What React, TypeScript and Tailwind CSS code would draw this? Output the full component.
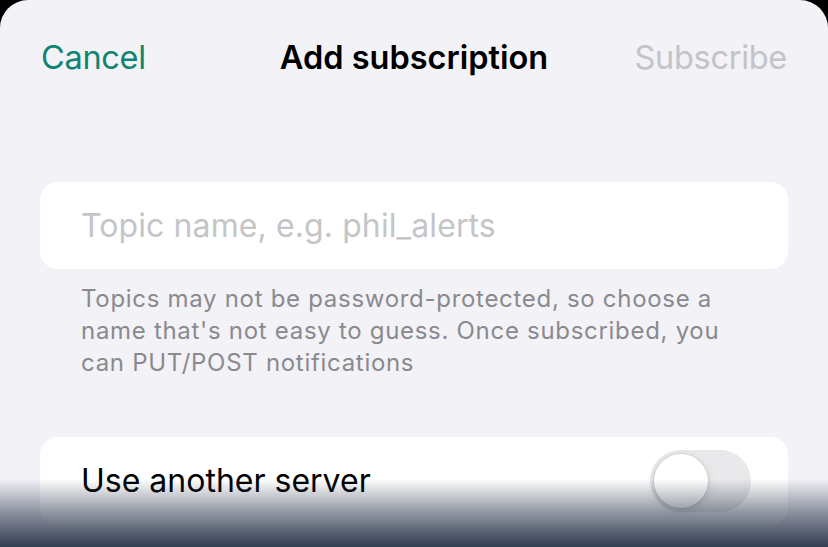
import * as React from "react";

export default function App() {
  const [useOther, setUseOther] = React.useState(false);

  return (
    <div className="bg-black w-[828px] h-[547px] overflow-hidden">
      <main
        className="relative bg-[#f2f2f7] w-full h-full rounded-t-[28px] overflow-hidden"
        style={{ fontFamily: "Inter, 'Noto Sans', sans-serif" }}
      >
        {/* Nav bar */}
        <header className="grid grid-cols-[1fr_auto_1fr] items-center px-[41px] pt-[34px] h-[78px]">
          <button className="justify-self-start text-[#0f8470] text-[32.5px] tracking-[-0.3px]">Cancel</button>
          <h1 className="text-black text-[32.5px] font-semibold tracking-[0px]">Add subscription</h1>
          <button className="justify-self-end text-[#c4c4c7] text-[32.5px] tracking-[-0.3px]">Subscribe</button>
        </header>

        <section className="px-[40px] pt-[104px]">
          <div className="bg-white rounded-[18px] h-[87px] flex items-center px-[41px]">
            <input
              className="w-full bg-transparent outline-none text-[32px] tracking-[0.1px] text-black placeholder:text-[#c5c5c8]"
              placeholder="Topic name, e.g. phil_alerts"
            />
          </div>
          <p className="px-[41px] pt-[14px] text-[24px] leading-[32px] text-[#8a8a8e] tracking-[0.7px]">
            Topics may not be password-protected, so choose a name that's not easy to guess. Once subscribed, you can PUT/POST notifications
          </p>

          <div className="mt-[58px] bg-white rounded-[18px] h-[88px] flex items-center justify-between pl-[41px] pr-[37px]">
            <span className="text-[32px] text-black">Use another server</span>
            <button
              onClick={() => setUseOther(!useOther)}
              className={`relative w-[101px] h-[62px] rounded-full ${useOther ? "bg-[#34c759]" : "bg-[#e9e9eb]"}`}
            >
              <span
                className={`absolute top-[4px] w-[54px] h-[54px] rounded-full bg-white shadow-[0_3px_8px_rgba(0,0,0,0.15),0_0_0_1px_rgba(0,0,0,0.06)] ${useOther ? "left-[43px]" : "left-[4px]"}`}
              />
            </button>
          </div>
        </section>

        {/* Bottom shade */}
        <div className="pointer-events-none absolute left-0 right-0 bottom-0 h-[68px] bg-gradient-to-b from-[rgba(51,61,82,0)] via-[rgba(51,61,82,0.55)] to-[#333d52]" />
      </main>
    </div>
  );
}
